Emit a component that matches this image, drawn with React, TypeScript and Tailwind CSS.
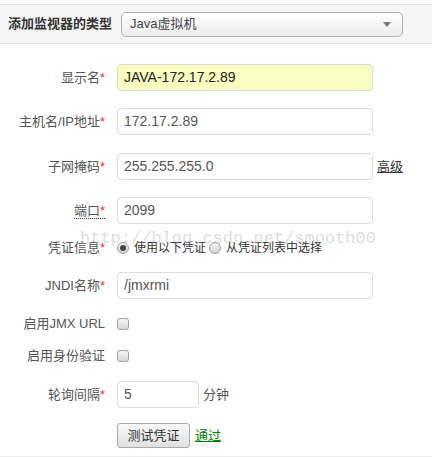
import React from 'react';

const font = { fontFamily: '"Liberation Sans", Arial, "Noto Sans CJK SC", sans-serif' };

const Label = ({ text, required = false, dotted = false }: { text: string; required?: boolean; dotted?: boolean }) => (
  <div className="w-[105px] shrink-0 text-right text-[13px] text-[#555]">
    <span className={dotted ? 'border-b border-dotted border-[#333]' : ''}>
      {text}
      {required && <span className="text-[#e9322d]">*</span>}
    </span>
  </div>
);

const Input = ({ value, className = '' }: { value: string; className?: string }) => (
  <div className={`h-[27px] rounded-[4px] border border-[#dcdcdc] px-[6px] flex items-center text-[14px] ${className}`}>{value}</div>
);

const Radio = ({ checked }: { checked?: boolean }) => (
  <span className="w-[12px] h-[12px] rounded-full border border-[#a0a0a0] bg-gradient-to-b from-[#f2f2f2] to-[#d4d4d4] flex items-center justify-center shrink-0">
    {checked && <span className="w-[6px] h-[6px] rounded-full bg-[#444]" />}
  </span>
);

const Checkbox = () => (
  <span className="w-[12px] h-[12px] rounded-[3px] border border-[#a0a0a0] bg-gradient-to-b from-[#f4f4f4] to-[#d6d6d6] block" />
);

export default function App() {
  return (
    <div className="relative w-[432px] h-[457px] bg-white overflow-hidden" style={font}>
      {/* Header */}
      <div className="mt-[4px] h-[40px] border-y border-[#e6e6e6] bg-[#f5f5f5] flex items-center">
        <span className="pl-[8px] w-[121px] text-[13px] font-bold text-[#333]">添加监视器的类型</span>
        <div className="w-[282px] h-[25px] rounded-[5px] border border-[#b0b0b0] bg-gradient-to-b from-white to-[#ececec] flex items-center justify-between px-[8px] text-[13px] text-[#444]">
          <span>Java虚拟机</span>
          <svg width="8" height="5" viewBox="0 0 8 5" className="mr-[3px]"><path d="M0 0h8L4 5z" fill="#777" /></svg>
        </div>
      </div>

      <div className="flex flex-col">
        <div className="mt-[20px] flex items-center gap-[12px]">
          <Label text="显示名" required />
          <Input value="JAVA-172.17.2.89" className="w-[256px] bg-[#fafec0] text-[#222]" />
        </div>
        <div className="mt-[17px] flex items-center gap-[12px]">
          <Label text="主机名/IP地址" required />
          <Input value="172.17.2.89" className="w-[256px] text-[#555]" />
        </div>
        <div className="mt-[18px] flex items-center gap-[12px]">
          <Label text="子网掩码" required />
          <Input value="255.255.255.0" className="w-[256px] text-[#555]" />
          <span className="-ml-[8px] text-[13px] text-[#333] underline">高级</span>
        </div>
        <div className="mt-[17px] flex items-center gap-[12px]">
          <Label text="端口" required dotted />
          <Input value="2099" className="w-[256px] text-[#555]" />
        </div>
        <div className="mt-[16px] h-[16px] flex items-center gap-[12px]">
          <Label text="凭证信息" required />
          <div className="flex items-center text-[12px] text-[#333]">
            <Radio checked />
            <span className="ml-[5px] mr-[3px]">使用以下凭证</span>
            <Radio />
            <span className="ml-[5px]">从凭证列表中选择</span>
          </div>
        </div>
        <div className="mt-[16px] flex items-center gap-[12px]">
          <Label text="JNDI名称" required />
          <Input value="/jmxrmi" className="w-[256px] text-[#555]" />
        </div>
        <div className="mt-[17px] h-[16px] flex items-center gap-[12px]">
          <Label text="启用JMX URL" />
          <Checkbox />
        </div>
        <div className="mt-[16px] h-[16px] flex items-center gap-[12px]">
          <Label text="启用身份验证" />
          <Checkbox />
        </div>
        <div className="mt-[17px] flex items-center gap-[12px]">
          <Label text="轮询间隔" required />
          <Input value="5" className="w-[82px] text-[#555]" />
          <span className="-ml-[8px] text-[13px] text-[#555]">分钟</span>
        </div>
        <div className="mt-[15px] flex items-center gap-[12px]">
          <div className="w-[105px] shrink-0" />
          <button className="w-[73px] h-[25px] rounded-[3px] border border-[#aaa] bg-gradient-to-b from-[#fafafa] to-[#e0e0e0] text-[13px] text-[#333]">测试凭证</button>
          <span className="-ml-[7px] text-[13px] text-[#008000] underline">通过</span>
        </div>
      </div>
      <div className="absolute left-0 right-0 top-[456px] border-t border-[#eee]" />

      {/* watermark */}
      <div className="absolute left-[80px] top-[226px] text-[17px] text-[#9a9a9a]/35 pointer-events-none" style={{ fontFamily: '"Liberation Mono", monospace' }}>
        http://blog.csdn.net/smooth00
      </div>
    </div>
  );
}
